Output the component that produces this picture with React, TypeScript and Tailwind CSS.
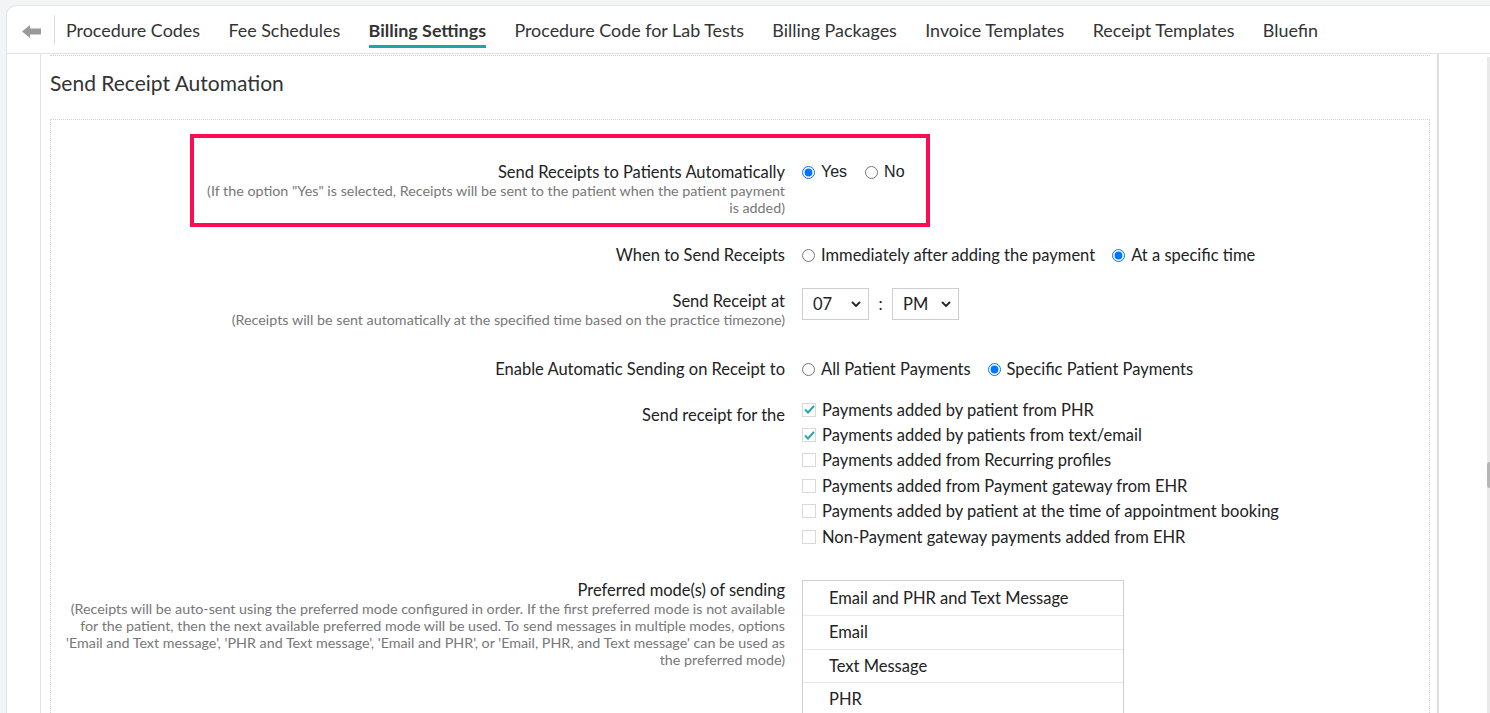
import React from "react";

const tabs = [
  "Procedure Codes",
  "Fee Schedules",
  "Billing Settings",
  "Procedure Code for Lab Tests",
  "Billing Packages",
  "Invoice Templates",
  "Receipt Templates",
  "Bluefin",
];

function Radio({ checked, label, arial }: { checked?: boolean; label: string; arial?: boolean }) {
  return (
    <label className="flex h-[20px] items-center gap-[6px]">
      <input type="radio" defaultChecked={checked} className="m-0 h-[13px] w-[13px]" name={label} readOnly />
      <span className={arial ? "font-['Liberation_Sans',sans-serif] text-[16px]" : ""}>{label}</span>
    </label>
  );
}

function Check({ checked, label }: { checked?: boolean; label: string }) {
  return (
    <div className="flex h-[25.4px] items-center gap-[6px]">
      <span className="flex h-[14px] w-[14px] items-center justify-center border border-[#d9d9d9] bg-white">
        {checked && (
          <svg width="11" height="9" viewBox="0 0 11 9">
            <path d="M1 4.5 L4 7.5 L10 1" fill="none" stroke="#2aa6aa" strokeWidth="2" />
          </svg>
        )}
      </span>
      <span>{label}</span>
    </div>
  );
}

function Select({ value }: { value: string }) {
  return (
    <div className="flex h-[32px] w-[67px] items-center justify-between border border-[#cfcfcf] bg-white pl-[10px] pr-[7px]">
      <span>{value}</span>
      <svg width="10" height="7" viewBox="0 0 10 7">
        <path d="M1 1 L5 5 L9 1" fill="none" stroke="#222" strokeWidth="1.8" />
      </svg>
    </div>
  );
}

export default function App() {
  return (
    <div className="h-[713px] w-[1490px] overflow-hidden bg-[#f3f4f6] pl-[6px] pt-[5px] font-['Lato',sans-serif] text-[16.5px] leading-[20px] text-[#222]">
      <div className="flex h-[708px] flex-col rounded-tl-[10px] border-l border-t border-[#e2e3e6] bg-white">
        {/* nav */}
        <div className="flex h-[48px] shrink-0 items-start border-b border-[#e2e2e2]">
          <div className="ml-[15px] mt-[19px]">
            <svg width="19" height="13" viewBox="0 0 19 13">
              <path d="M0 6.5 L8 0 L8 3.5 L19 3.5 L19 9.5 L8 9.5 L8 13 Z" fill="#9a9a9a" />
            </svg>
          </div>
          <div className="ml-[13px] mt-[9px] h-[30px] w-px bg-[#dcdcdc]" />
          <div className="ml-[11px] flex gap-[28.4px] pt-[13px]">
            {tabs.map((t) => (
              <div
                key={t}
                className={
                  "h-[29px] whitespace-nowrap border-b-[3px] text-[17.9px] leading-[22px] " +
                  (t === "Billing Settings" ? "border-[#1fa5a8] font-bold text-[#333]" : "border-transparent text-[#333]")
                }
              >
                {t}
              </div>
            ))}
          </div>
        </div>
        {/* body */}
        <div className="flex flex-1">
          <div className="w-[34px] shrink-0 border-r border-[#e2e2e2]" />
          <div className="w-[1396px] shrink-0 pl-[9px] pr-[7px]">
            <div className="mt-px border-t border-dotted border-[#cfcfcf]">
              <div className="mt-[15px] text-[21px] leading-[24px] text-[#333]">Send Receipt Automation</div>
              <div className="mt-[24px] h-[700px] border border-dotted border-[#d4d4d4]">
                {/* row 1 highlighted */}
                <div className="ml-[139px] mt-[14px] flex h-[93px] w-[740px] border-4 border-[#ff0a55]">
                  <div className="w-[591px] shrink-0 pt-[24px] text-right">
                    <div className="whitespace-nowrap">Send Receipts to Patients Automatically</div>
                    <div className="whitespace-nowrap text-[14.3px] leading-[17px] text-[#777]">
                      (If the option "Yes" is selected, Receipts will be sent to the patient when the patient payment
                      <br />
                      is added)
                    </div>
                  </div>
                  <div className="ml-[17px] flex gap-[18px] pt-[24px]">
                    <Radio checked label="Yes" arial />
                    <Radio label="No" arial />
                  </div>
                </div>
                {/* row 2 */}
                <div className="mt-[18px] flex h-[20px] items-center">
                  <div className="w-[734px] shrink-0 whitespace-nowrap text-right">When to Send Receipts</div>
                  <div className="ml-[17px] flex items-center gap-[17px] whitespace-nowrap">
                    <Radio label="Immediately after adding the payment" />
                    <Radio checked label="At a specific time" />
                  </div>
                </div>
                {/* row 3 */}
                <div className="mt-[23px] flex items-start">
                  <div className="w-[734px] shrink-0 pt-[4px] text-right">
                    <div className="leading-[19px]">Send Receipt at</div>
                    <div className="whitespace-nowrap text-[14.3px] leading-[17px] text-[#777]">
                      (Receipts will be sent automatically at the specified time based on the practice timezone)
                    </div>
                  </div>
                  <div className="ml-[17px] flex items-center">
                    <Select value="07" />
                    <span className="mx-[7px] w-[9px] text-center">:</span>
                    <Select value="PM" />
                  </div>
                </div>
                {/* row 4 */}
                <div className="mt-[31px] flex h-[20px] items-center">
                  <div className="w-[734px] shrink-0 whitespace-nowrap text-right">Enable Automatic Sending on Receipt to</div>
                  <div className="ml-[17px] flex items-center gap-[17px] whitespace-nowrap">
                    <Radio label="All Patient Payments" />
                    <Radio checked label="Specific Patient Payments" />
                  </div>
                </div>
                {/* row 5 */}
                <div className="mt-[18px] flex items-start">
                  <div className="w-[734px] shrink-0 pt-[8px] text-right">Send receipt for the</div>
                  <div className="ml-[17px] flex flex-col whitespace-nowrap">
                    <Check checked label="Payments added by patient from PHR" />
                    <Check checked label="Payments added by patients from text/email" />
                    <Check label="Payments added from Recurring profiles" />
                    <Check label="Payments added from Payment gateway from EHR" />
                    <Check label="Payments added by patient at the time of appointment booking" />
                    <Check label="Non-Payment gateway payments added from EHR" />
                  </div>
                </div>
                {/* row 6 */}
                <div className="mt-[31px] flex items-start">
                  <div className="w-[734px] shrink-0 text-right">
                    <div>Preferred mode(s) of sending</div>
                    <div className="whitespace-nowrap text-[14.3px] leading-[17px] text-[#777]">
                      (Receipts will be auto-sent using the preferred mode configured in order. If the first preferred mode is not available
                      <br />
                      for the patient, then the next available preferred mode will be used. To send messages in multiple modes, options
                      <br />
                      'Email and Text message', 'PHR and Text message', 'Email and PHR', or 'Email, PHR, and Text message' can be used as
                      <br />
                      the preferred mode)
                    </div>
                  </div>
                  <div className="ml-[17px] w-[322px] border-l border-r border-t border-[#cfcfcf]">
                    {["Email and PHR and Text Message", "Email", "Text Message", "PHR"].map((m, i) => (
                      <div
                        key={m}
                        className={"flex h-[33.6px] items-center pl-[26px] " + (i > 0 ? "border-t border-[#e8e8e8]" : "")}
                      >
                        {m}
                      </div>
                    ))}
                  </div>
                </div>
              </div>
            </div>
          </div>
          <div className="w-[2px] shrink-0 bg-[#dedede]" />
          <div className="flex-1" />
          <div className="relative mt-[3px] w-[3px] shrink-0 bg-[#e9e9e9]">
            <div className="absolute left-0 top-[405px] h-[26px] w-[3px] rounded-l bg-[#b5b5b5]" />
          </div>
        </div>
      </div>
    </div>
  );
}
